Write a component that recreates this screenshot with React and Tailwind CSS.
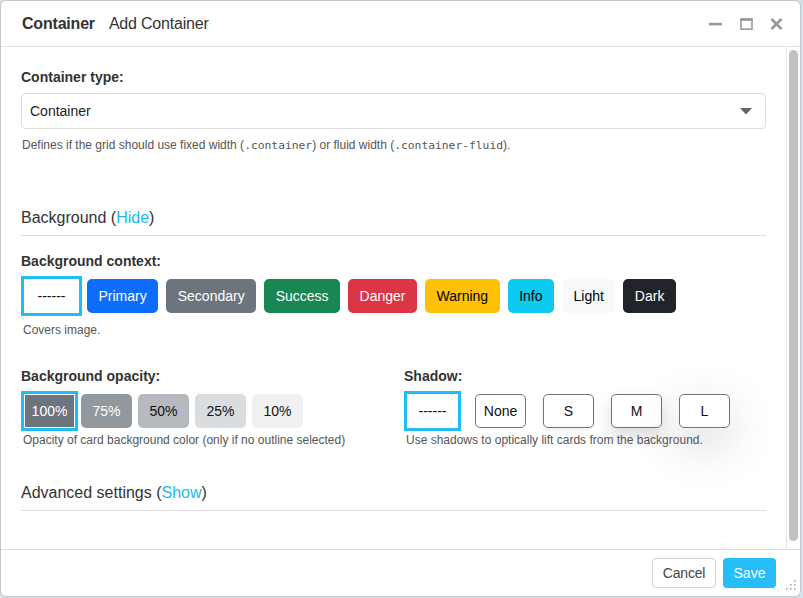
import React from "react";

const ctxButtons = [
  { label: "Primary", cls: "bg-[#0d6efd] text-white" },
  { label: "Secondary", cls: "bg-[#6c757d] text-white" },
  { label: "Success", cls: "bg-[#198754] text-white" },
  { label: "Danger", cls: "bg-[#dc3545] text-white" },
  { label: "Warning", cls: "bg-[#ffc107] text-black" },
  { label: "Info", cls: "bg-[#0dcaf0] text-black" },
  { label: "Light", cls: "bg-[#f8f9fa] text-black" },
  { label: "Dark", cls: "bg-[#212529] text-white" },
];

const opButtons = [
  { label: "75%", cls: "bg-[#91989e] text-white" },
  { label: "50%", cls: "bg-[#b6babe] text-[#111]" },
  { label: "25%", cls: "bg-[#dadddf] text-[#111]" },
  { label: "10%", cls: "bg-[#f0f1f2] text-[#111]" },
];

const shadowButtons = [
  { label: "None", cls: "" },
  { label: "S", cls: "shadow-[0_2px_4px_rgba(0,0,0,0.075)]" },
  { label: "M", cls: "shadow-[0_8px_16px_rgba(0,0,0,0.15)]" },
  { label: "L", cls: "shadow-[0_16px_48px_rgba(0,0,0,0.175)]" },
];

function Label({ children, className = "" }) {
  return (
    <div className={"text-[14px] leading-[20px] font-bold text-[#333] " + className}>
      {children}
    </div>
  );
}

export default function App() {
  return (
    <div className="w-[803px] h-[598px] bg-[#d6e2ea] font-['Liberation_Sans',Arial,sans-serif] text-[#333]">
      <div className="relative w-[801px] h-[597px] bg-white border border-[#c6c6c6] rounded-[6px] flex flex-col overflow-hidden">
        {/* Header */}
        <div className="h-[45px] shrink-0 flex items-center pl-[21px] pr-[17px]">
          <div className="text-[16px] font-bold text-[#333] tracking-[-0.2px]">Container</div>
          <div className="text-[16px] text-[#333] ml-[14px] tracking-[-0.2px]">Add Container</div>
          <div className="ml-auto flex items-center">
            <svg width="13" height="12" viewBox="0 0 13 12">
              <rect x="0" y="4.8" width="13" height="2.6" fill="#9a9a9a" />
            </svg>
            <svg width="13" height="12" viewBox="0 0 13 12" className="ml-[18px]">
              <rect x="1" y="1" width="11" height="10.2" fill="none" stroke="#9a9a9a" strokeWidth="1.6" />
              <rect x="0.5" y="0.3" width="12" height="2.6" fill="#9a9a9a" />
            </svg>
            <svg width="13" height="12" viewBox="0 0 13 12" className="ml-[17px]">
              <path d="M1.5 1 L11.5 11 M11.5 1 L1.5 11" stroke="#9a9a9a" strokeWidth="2.8" />
            </svg>
          </div>
        </div>
        <div className="h-px bg-[#e2e2e2] shrink-0" />

        {/* Body */}
        <div className="flex h-[502px] shrink-0 min-h-0">
          <div className="flex-1 pl-[20px] pr-[20px] pt-[20px] overflow-hidden">
            <Label>Container type:</Label>
            <div className="mt-[6px] h-[36px] border border-[#dcdcdc] rounded-[4px] flex items-center justify-between pl-[8px] pr-[13px]">
              <span className="text-[14px] text-[#222]">Container</span>
              <svg width="12" height="7" viewBox="0 0 12 7">
                <path d="M0 0 L12 0 L6 6.5 Z" fill="#666" />
              </svg>
            </div>
            <div className="mt-[7px] h-[18px] text-[12px] leading-[18px] text-[#555] pl-px">
              Defines if the grid should use fixed width (
              <code className="font-['DejaVu_Sans_Mono',monospace] text-[11.3px] leading-none">.container</code>
              ) or fluid width (
              <code className="font-['DejaVu_Sans_Mono',monospace] text-[11.3px] leading-none">.container-fluid</code>
              ).
            </div>

            <div className="mt-[52px] text-[16px] leading-[24px] text-[#333]">
              Background (<span className="text-[#1cb8f2]">Hide</span>)
            </div>
            <div className="mt-[5px] h-px bg-[#dedede]" />

            <Label className="mt-[15px]">Background context:</Label>
            <div className="mt-[8px] flex items-center gap-[8px]">
              <div className="ml-[3px] w-[55px] h-[34px] flex items-center justify-center bg-white outline-[3px] outline-solid outline-[#1fbcf5] text-[14px] text-[#111]">
                ------
              </div>
              {ctxButtons.map((b) => (
                <div
                  key={b.label}
                  className={"h-[34px] px-[11.5px] flex items-center rounded-[5px] text-[14px] " + b.cls}
                >
                  {b.label}
                </div>
              ))}
            </div>
            <div className="mt-[8px] text-[12px] leading-[18px] text-[#555] pl-[2px]">Covers image.</div>

            <div className="mt-[27px] grid grid-cols-2 gap-x-[21px]">
              <div>
                <Label>Background opacity:</Label>
                <div className="mt-[8px] flex items-center gap-[6px]">
                  <div className="ml-[3px] w-[51px] h-[34px] flex items-center justify-center bg-[#6c757d] border border-white outline-[3px] outline-solid outline-[#1fbcf5] text-[14px] text-white">
                    100%
                  </div>
                  {opButtons.map((b) => (
                    <div
                      key={b.label}
                      className={"w-[51px] h-[34px] flex items-center justify-center rounded-[5px] text-[14px] " + b.cls}
                    >
                      {b.label}
                    </div>
                  ))}
                </div>
                <div className="mt-[3px] text-[12px] leading-[18px] text-[#555] pl-[2px]">
                  Opacity of card background color (only if no outline selected)
                </div>
              </div>
              <div>
                <Label>Shadow:</Label>
                <div className="mt-[8px] flex items-center gap-[17px]">
                  <div className="ml-[3px] w-[51px] h-[34px] flex items-center justify-center bg-white outline-[3px] outline-solid outline-[#1fbcf5] text-[14px] text-[#111]">
                    ------
                  </div>
                  {shadowButtons.map((b) => (
                    <div
                      key={b.label}
                      className={"w-[51px] h-[34px] flex items-center justify-center rounded-[5px] bg-white border border-[#6c757d] text-[14px] text-[#111] " + b.cls}
                    >
                      {b.label}
                    </div>
                  ))}
                </div>
                <div className="mt-[3px] text-[12px] leading-[18px] text-[#555] pl-[2px]">
                  Use shadows to optically lift cards from the background.
                </div>
              </div>
            </div>

            <div className="mt-[32px] text-[16px] leading-[24px] text-[#333]">
              Advanced settings (<span className="text-[#1cb8f2]">Show</span>)
            </div>
            <div className="mt-[5px] h-px bg-[#dedede]" />
          </div>
          <div className="w-[14px] shrink-0 border-l border-[#e6e6e6] pt-[3px] pb-[8px] pl-[2px]">
            <div className="w-[9px] h-full rounded-full bg-[#c1c1c1]" />
          </div>
        </div>

        <div className="h-px bg-[#dcdcdc] shrink-0" />
        {/* Footer */}
        <div className="flex-1 flex items-center justify-end gap-[7px] pr-[24px]">
          <div className="h-[30px] w-[64px] justify-center flex items-center border border-[#d0d0d0] rounded-[4px] text-[14px] text-[#444] bg-white tracking-[-0.2px]">
            Cancel
          </div>
          <div className="h-[30px] w-[53px] justify-center flex items-center rounded-[4px] text-[14px] text-white bg-[#26bdf8]">
            Save
          </div>
        </div>
        <svg className="absolute right-[3px] bottom-[5px]" width="11" height="11" viewBox="0 0 11 11">
          <rect x="8" y="0" width="1.5" height="1.5" fill="#a0a0a0" />
          <rect x="4" y="4" width="1.5" height="1.5" fill="#a0a0a0" />
          <rect x="8" y="4" width="1.5" height="1.5" fill="#a0a0a0" />
          <rect x="0" y="8" width="1.5" height="1.5" fill="#a0a0a0" />
          <rect x="4" y="8" width="1.5" height="1.5" fill="#a0a0a0" />
          <rect x="8" y="8" width="1.5" height="1.5" fill="#a0a0a0" />
        </svg>
      </div>
    </div>
  );
}
